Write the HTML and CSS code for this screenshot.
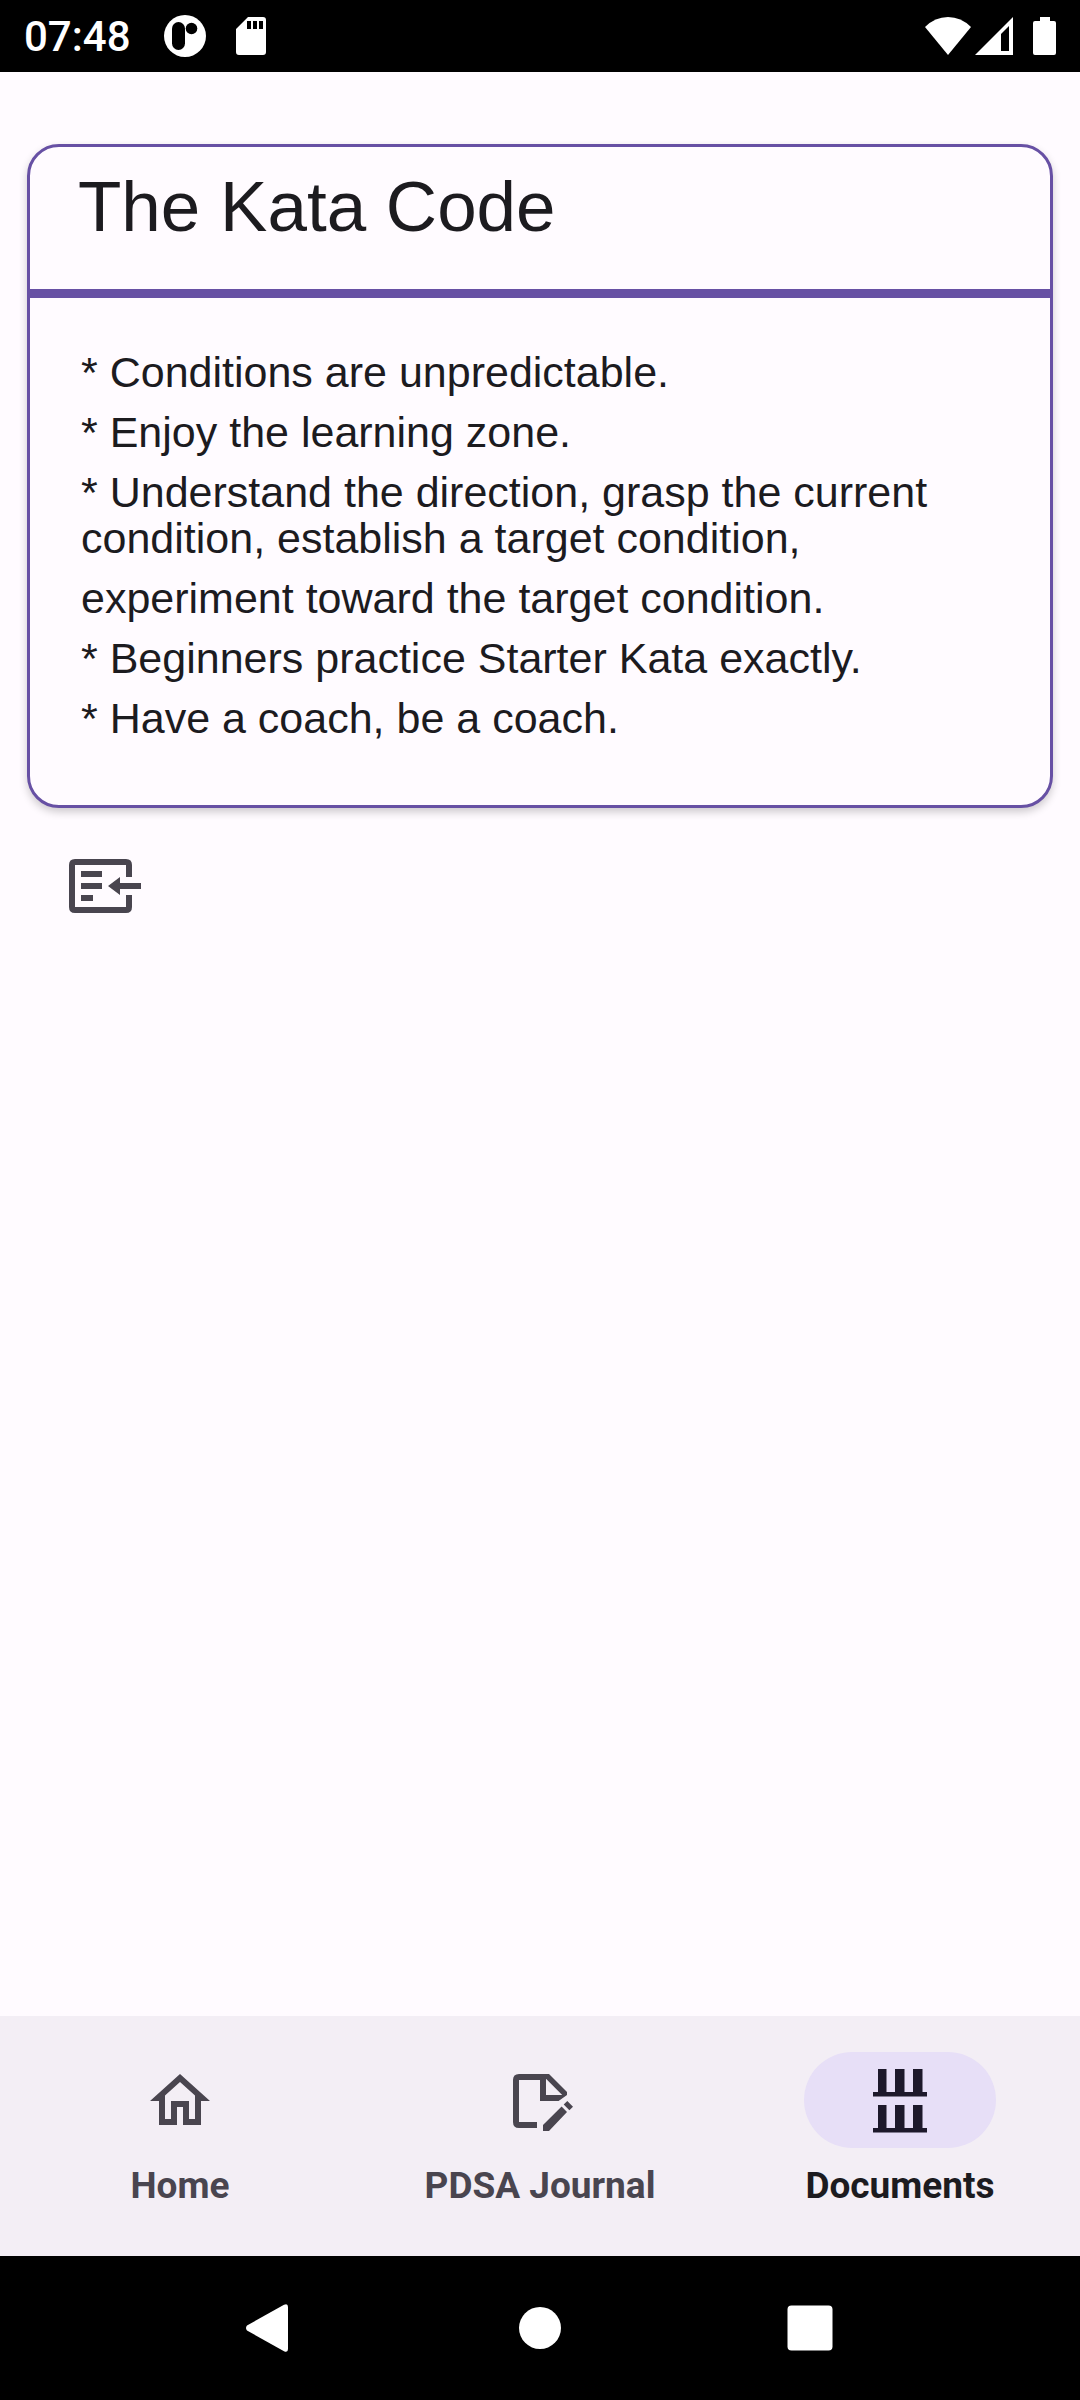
FILE: index.html
```html
<!DOCTYPE html>
<html lang="en">
<head>
<meta charset="utf-8">
<meta name="viewport" content="width=device-width, initial-scale=1">
<title>The Kata Code</title>
<link rel="stylesheet" href="styles.css">
</head>
<body>
<header class="status-bar">
  <time class="clock">07:48</time>
  <svg class="notification" width="42" height="42" viewBox="0 0 42 42" aria-hidden="true">
    <circle cx="21" cy="21" r="21" fill="#fff"/>
    <rect x="8" y="7" width="13" height="28" rx="6.5"/>
    <circle cx="27.5" cy="13.5" r="5.8"/>
  </svg>
  <svg class="storage" width="30" height="38" viewBox="0 0 30 38" aria-hidden="true">
    <path fill="#fff" fill-rule="evenodd" d="M12 0H27Q30 0 30 3V35Q30 38 27 38H3Q0 38 0 35V12ZM11 4V12H15V4ZM17 4V12H21V4ZM23 4V12H27V4Z"/>
  </svg>
  <div class="system-icons">
    <svg width="46" height="38" viewBox="0 0 46 38" aria-hidden="true"><path fill="#fff" d="M0 10Q10 0 23 0T46 10L23 38Z"/></svg>
    <svg width="38" height="38" viewBox="0 0 38 38" aria-hidden="true"><path fill="#fff" fill-rule="evenodd" d="M38 0V38H0ZM34 9L26 17V34H34Z"/></svg>
    <svg class="battery" width="23" height="38" viewBox="0 0 23 38" aria-hidden="true"><path fill="#fff" d="M7 0H17V4H21Q23 4 23 6V36Q23 38 21 38H2Q0 38 0 36V6Q0 4 2 4H7Z"/></svg>
  </div>
</header>

<main class="content">
  <article class="card">
    <h1 class="card-title">The Kata Code</h1>
    <div class="card-body">
      <p>* Conditions are unpredictable.</p>
      <p>* Enjoy the learning zone.</p>
      <p>* Understand the direction, grasp the current condition, establish a target condition,</p>
      <p>experiment toward the target condition.</p>
      <p>* Beginners practice Starter Kata exactly.</p>
      <p>* Have a coach, be a coach.</p>
    </div>
  </article>
  <button class="import" type="button" aria-label="Import">
    <svg width="72" height="72" viewBox="0 0 24 24" fill="currentColor" aria-hidden="true">
      <path d="M2 3H19Q21 3 21 5V9H19V5H2V19H19V15H21V19Q21 21 19 21H2Q0 21 0 19V5Q0 3 2 3Z"/>
      <path d="M4 7H11V9H4ZM4 11H11V13H4ZM4 15H8V17H4ZM13 12L17 9V11H24V13H17V15Z"/>
    </svg>
  </button>
</main>

<nav class="tabs" aria-label="Main">
  <a class="tab" href="#home">
    <span class="tab-icon"><svg width="72" height="72" viewBox="0 0 24 24" fill="currentColor" aria-hidden="true"><path d="M12 5.69l5 4.5V18h-2v-6H9v6H7v-7.810l5-4.5M12 3L2 12h3v8h6v-6h2v6h6v-8h3L12 3z"/></svg></span>
    <span>Home</span>
  </a>
  <a class="tab" href="#journal">
    <span class="tab-icon"><svg width="72" height="72" viewBox="0 0 24 24" fill="currentColor" aria-hidden="true"><path fill-rule="evenodd" d="M5 3H15L21 9V10L18.200 12H12V5H5V19H11V21H5Q3 21 3 19V5Q3 3 5 3ZM14 4.600V10H19.400Z"/><path d="M13 22V20L19.200 13.800L21 15.700L15 22ZM19.900 13.200L21.100 12L23 13.900L21.800 15.100Z"/></svg></span>
    <span>PDSA Journal</span>
  </a>
  <a class="tab active" href="#documents" aria-current="page">
    <span class="tab-icon"><svg width="72" height="72" viewBox="0 0 72 72" fill="currentColor" aria-hidden="true"><path d="M9 27H14V4H22.500V27H31V4H40.500V27H49V4H58.500V27H63V31.500H9ZM9 63H14V40H22.500V63H31V40H40.500V63H49V40H58.500V63H63V67.500H9Z"/></svg></span>
    <span>Documents</span>
  </a>
</nav>

<footer class="system-nav">
  <button type="button" aria-label="Back"><svg width="48" height="48" viewBox="0 0 48 48" aria-hidden="true"><path fill="#fff" d="M38 .8Q42 -1 42 3V45Q42 49 38 47.200L1 26.500Q-1 24 1 21.500Z"/></svg></button>
  <button type="button" aria-label="Home"><svg width="48" height="48" viewBox="0 0 48 48" aria-hidden="true"><circle cx="24" cy="24" r="21" fill="#fff"/></svg></button>
  <button type="button" aria-label="Recent apps"><svg width="48" height="48" viewBox="0 0 48 48" aria-hidden="true"><rect x="1.500" y="1.500" width="45" height="45" rx="4" fill="#fff"/></svg></button>
</footer>
</body>
</html>
```
FILE: styles.css
```css
* { box-sizing: border-box; }

body {
  margin: 0;
  min-height: 100vh;
  display: flex;
  flex-direction: column;
  background: #fffbff;
  color: #1c1b1f;
  font-family: "Liberation Sans", Arial, sans-serif;
}

svg { display: block; }

button {
  border: 0;
  padding: 0;
  background: none;
  color: inherit;
}

.status-bar {
  height: 72px;
  padding: 0 24px;
  display: flex;
  align-items: center;
  background: #000;
  color: #fff;
}

.clock {
  padding-top: 2px;
  font: 500 42px/48px Roboto, sans-serif;
}

.notification { margin-left: 33px; }
.storage { margin-left: 30px; }

.system-icons {
  margin-left: auto;
  display: flex;
  gap: 4px;
}

.battery { margin-left: 16px; }

.content {
  flex: 1;
  padding: 72px 27px 0;
}

.card {
  border: 3px solid #6750a4;
  border-radius: 32px;
  box-shadow: 0 4px 8px rgba(0, 0, 0, 0.2);
  background: #fffbff;
}

.card-title {
  margin: 0;
  padding: 20px 48px 42px;
  border-bottom: 9px solid #6750a4;
  font-size: 71px;
  font-weight: 400;
  line-height: 80px;
}

.card-body {
  padding: 51px 51px 64px;
  display: flex;
  flex-direction: column;
  gap: 14px;
  font-size: 43px;
  line-height: 46px;
}

.card-body p { margin: 0; }

.import {
  margin: 42px;
  color: #49454f;
}

.tabs {
  height: 240px;
  padding-top: 36px;
  display: flex;
  background: #f3eef5;
}

.tab {
  flex: 1;
  display: flex;
  flex-direction: column;
  align-items: center;
  gap: 16px;
  color: #49454f;
  font: 700 37px/44px Roboto, sans-serif;
  text-decoration: none;
}

.tab-icon {
  width: 192px;
  height: 96px;
  padding-top: 2px;
  display: flex;
  align-items: center;
  justify-content: center;
  border-radius: 48px;
}

.active { color: #1c1b1f; }

.active .tab-icon {
  background: #e7dff7;
  color: #1d192b;
}

.system-nav {
  height: 144px;
  padding: 0 12.5%;
  display: flex;
  background: #000;
}

.system-nav button {
  flex: 1;
  display: flex;
  align-items: center;
  justify-content: center;
}
```
